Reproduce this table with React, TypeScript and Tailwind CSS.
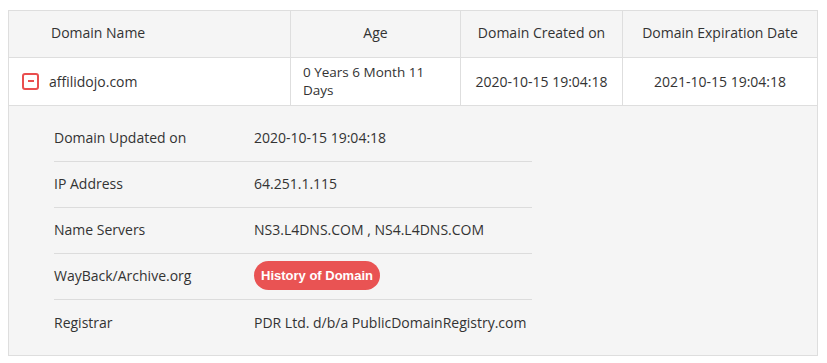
import React from "react";

const details: { label: string; value: string; button?: boolean }[] = [
  { label: "Domain Updated on", value: "2020-10-15 19:04:18" },
  { label: "IP Address", value: "64.251.1.115" },
  { label: "Name Servers", value: "NS3.L4DNS.COM , NS4.L4DNS.COM" },
  { label: "WayBack/Archive.org", value: "History of Domain", button: true },
  { label: "Registrar", value: "PDR Ltd. d/b/a PublicDomainRegistry.com" },
];

export default function App() {
  return (
    <div className="min-h-screen bg-white pl-2 pt-[10px] text-[14px] text-[#333] font-['Open_Sans',sans-serif]">
      <table className="w-[809px] border-collapse table-fixed">
        <colgroup>
          <col className="w-[282px]" />
          <col className="w-[170px]" />
          <col className="w-[162px]" />
          <col className="w-[195px]" />
        </colgroup>
        <thead>
          <tr className="h-[47px] bg-[#f5f5f5]">
            <th className="border border-[#dedede] pb-[3px] pl-[42px] text-left font-normal">Domain Name</th>
            <th className="border border-[#dedede] pb-[3px] text-center font-normal">Age</th>
            <th className="border border-[#dedede] pb-[3px] text-center font-normal">Domain Created on</th>
            <th className="border border-[#dedede] pb-[3px] text-center font-normal">Domain Expiration Date</th>
          </tr>
        </thead>
        <tbody>
          <tr className="h-[48px] bg-white">
            <td className="border border-[#dedede] pl-[13px] pb-[1px]">
              <div className="flex items-center gap-[10px]">
                {/* collapse toggle */}
                <span className="flex h-[17px] w-[17px] items-center justify-center rounded-[3px] border-2 border-[#e94e4e]">
                  <span className="h-[2px] w-[6px] bg-[#e94e4e]" />
                </span>
                <span>affilidojo.com</span>
              </div>
            </td>
            <td className="border border-[#dedede] px-[12px] pb-[2px] leading-[18px] text-[13.5px]">
              0 Years 6 Month 11
              <br />
              Days
            </td>
            <td className="border border-[#dedede] pb-[1px] text-center">2020-10-15 19:04:18</td>
            <td className="border border-[#dedede] pb-[1px] text-center">2021-10-15 19:04:18</td>
          </tr>
          <tr>
            <td colSpan={4} className="border border-[#dedede] bg-[#f5f5f5] pl-[45px] pt-[10px] pb-[9px]">
              <div className="flex w-[478px] flex-col">
                {details.map((d, i) => (
                  <div
                    key={d.label}
                    className={`flex h-[46px] items-center pb-[2px] ${i < details.length - 1 ? "border-b border-[#dcdcdc]" : ""}`}
                  >
                    <div className="w-[200px]">{d.label}</div>
                    {d.button ? (
                      <span className="rounded-full bg-[#e95353] px-[7px] py-[5px] text-[13px] font-bold text-white font-['Liberation_Sans',Arial,sans-serif]">
                        {d.value}
                      </span>
                    ) : (
                      <div>{d.value}</div>
                    )}
                  </div>
                ))}
              </div>
            </td>
          </tr>
        </tbody>
      </table>
    </div>
  );
}
